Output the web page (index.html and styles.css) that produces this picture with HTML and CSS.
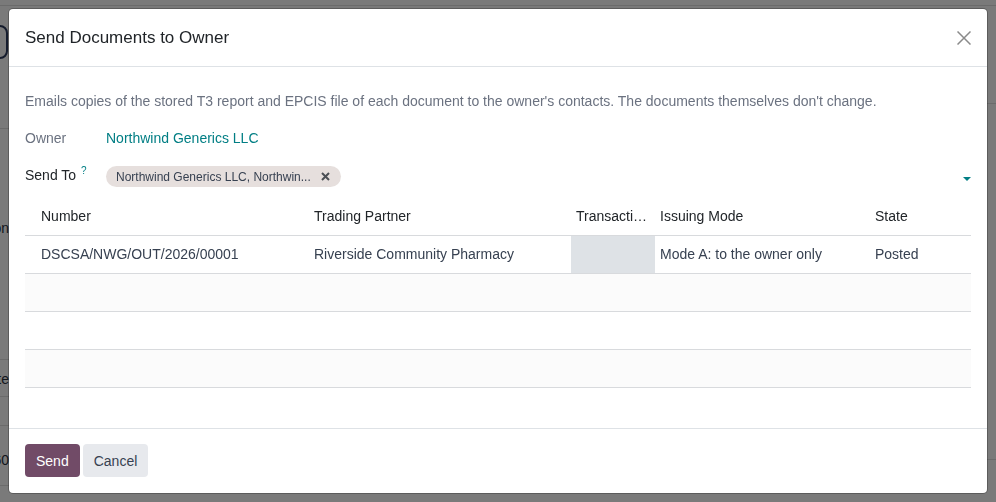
FILE: index.html
```html
<!DOCTYPE html>
<html lang="en">
<head>
    <meta charset="UTF-8">
    <meta name="viewport" content="width=device-width, initial-scale=1.0">
    <title>Send Documents to Owner</title>
    <link rel="stylesheet" href="styles.css">
</head>
<body>
    <!-- list view behind the dialog -->
    <div class="page">
        <div class="page-nav"></div>
        <div class="page-main">
            <div class="page-col page-col-left">
                <div class="cp-button"></div>
                <div class="page-block block-head"></div>
                <div class="page-block block-desc"><span class="page-text">Description</span></div>
                <div class="page-block block-date"><span class="page-text">Date</span></div>
                <div class="page-block block-gap"></div>
                <div class="page-block block-num"><span class="page-text">20260</span></div>
            </div>
            <div class="page-col">
                <div class="page-block block-right-top"></div>
                <div class="page-block block-right-mid"></div>
            </div>
        </div>
    </div>

    <div class="backdrop">
        <div class="modal">
            <header class="modal-header">
                <h4 class="modal-title">Send Documents to Owner</h4>
                <button class="btn-close" aria-label="Close">
                    <svg width="14" height="14" viewBox="0 0 14 14">
                        <path d="M0.5 0.5 L13.5 13.5 M13.5 0.5 L0.5 13.5" stroke="#8a8a8a" stroke-width="1.5" fill="none"/>
                    </svg>
                </button>
            </header>

            <main class="modal-body">
                <p class="intro">Emails copies of the stored T3 report and EPCIS file of each document to the owner's contacts. The documents themselves don't change.</p>

                <div class="field">
                    <span class="field-label muted">Owner</span>
                    <a class="field-link" href="#">Northwind Generics LLC</a>
                </div>

                <div class="field">
                    <span class="field-label">Send To <sup class="help">?</sup></span>
                    <div class="m2m">
                        <span class="tag">
                            Northwind Generics LLC, Northwin...
                            <svg class="tag-x" width="9" height="9" viewBox="0 0 9 9">
                                <path d="M1 1 L8 8 M8 1 L1 8" stroke="#4b4f55" stroke-width="2" fill="none"/>
                            </svg>
                        </span>
                        <span class="caret"></span>
                    </div>
                </div>

                <table class="doc-list">
                    <colgroup>
                        <col style="width: 284px">
                        <col style="width: 262px">
                        <col style="width: 84px">
                        <col style="width: 215px">
                        <col style="width: 101px">
                    </colgroup>
                    <thead>
                        <tr>
                            <th>Number</th>
                            <th>Trading Partner</th>
                            <th title="Transaction Statement">Transacti…</th>
                            <th>Issuing Mode</th>
                            <th>State</th>
                        </tr>
                    </thead>
                    <tbody>
                        <tr>
                            <td>DSCSA/NWG/OUT/2026/00001</td>
                            <td>Riverside Community Pharmacy</td>
                            <td class="readonly"></td>
                            <td>Mode A: to the owner only</td>
                            <td>Posted</td>
                        </tr>
                        <tr class="filler"><td></td><td></td><td></td><td></td><td></td></tr>
                        <tr class="filler"><td></td><td></td><td></td><td></td><td></td></tr>
                        <tr class="filler"><td></td><td></td><td></td><td></td><td></td></tr>
                    </tbody>
                </table>
            </main>

            <footer class="modal-footer">
                <button class="btn btn-primary">Send</button>
                <button class="btn btn-secondary">Cancel</button>
            </footer>
        </div>
    </div>
</body>
</html>
```

FILE: styles.css
```css
* {
    box-sizing: border-box;
}
body {
    margin: 0;
    height: 100vh;
    overflow: hidden;
    font-family: "Liberation Sans", Arial, sans-serif;
    font-size: 14px;
    color: #374151;
    background: #fff;
}

/* page under the dialog */
.page {
    height: 100%;
    display: flex;
    flex-direction: column;
}
.page-nav {
    height: 6px;
    flex-shrink: 0;
    border-bottom: 1px solid #e0e0e0;
}
.page-main {
    flex: 1;
    display: flex;
    justify-content: space-between;
}
.page-col {
    width: 30px;
}
.page-col-left {
    width: 9px;
}
.cp-button {
    height: 34px;
    width: 40px;
    margin: 19px 0 0 -32px;
    border: 2px solid #2d3b5e;
    border-radius: 8px;
}
.page-block {
    display: flex;
    justify-content: flex-end;
    align-items: flex-start;
    border-bottom: 1px solid #e0e0e0;
}
.page-text {
    white-space: nowrap;
    line-height: 24px;
    color: #2b3140;
}
.block-head { height: 70px; }
.block-desc { height: 230px; padding-top: 87px; border-bottom: 0; }
.block-date { height: 38px; padding-top: 7px; border-top: 1px solid #e0e0e0; }
.block-gap { height: 29px; }
.block-num { height: 60px; padding-top: 22px; }
.block-right-top { height: 98px; }
.block-right-mid { height: 356px; }

/* dialog */
.backdrop {
    position: fixed;
    inset: 0;
    padding: 9px;
    display: flex;
    background: rgba(0, 0, 0, 0.52);
}
.modal {
    flex: 1;
    display: flex;
    flex-direction: column;
    background: #fff;
    border-radius: 4px;
    box-shadow: 0 0 0 1px rgba(0, 0, 0, 0.25);
}
.modal-header {
    display: flex;
    align-items: center;
    padding: 17px 16px 16px;
    border-bottom: 1px solid #dee2e6;
}
.modal-title {
    margin: 0;
    font-size: 17px;
    font-weight: normal;
    line-height: 24px;
    color: #212529;
}
.btn-close {
    margin-left: auto;
    padding: 0;
    border: 0;
    background: none;
    display: flex;
}

.modal-body {
    flex: 1;
    padding: 24px 16px 0;
}
.intro {
    margin: 0 0 9px;
    line-height: 20px;
    color: #6b7280;
}
.field {
    display: flex;
    align-items: center;
    height: 36px;
}
.field-label {
    width: 81px;
    flex-shrink: 0;
    color: #212529;
}
.field-label.muted {
    color: #6b7280;
}
.help {
    font-size: 10px;
    color: #017e84;
    margin-left: 1px;
}
.field-link {
    color: #017e84;
    text-decoration: none;
}
.m2m {
    flex: 1;
    display: flex;
    align-items: center;
}
.tag {
    display: inline-flex;
    align-items: center;
    height: 21px;
    margin-top: 5px;
    padding: 0 11px 0 10px;
    border-radius: 11px;
    background: #e6dfdd;
    font-size: 12px;
    color: #374151;
    white-space: nowrap;
}
.tag-x {
    margin-left: 10px;
}
.caret {
    margin: 10px 0 0 auto;
    width: 0;
    height: 0;
    border-left: 4px solid transparent;
    border-right: 4px solid transparent;
    border-top: 4px solid #017e84;
}

.doc-list {
    width: 100%;
    margin-top: 5px;
    table-layout: fixed;
    border-collapse: collapse;
}
.doc-list th,
.doc-list td {
    height: 38px;
    padding: 0 5px;
    text-align: left;
    white-space: nowrap;
    overflow: hidden;
    border-bottom: 1px solid #d8dadd;
}
.doc-list th {
    font-weight: normal;
    color: #212529;
}
.doc-list th:first-child,
.doc-list td:first-child {
    padding-left: 16px;
}
.doc-list td {
    color: #374151;
}
.doc-list td.readonly {
    background: #dee2e6;
}
.doc-list tbody tr:nth-child(even) {
    background: #fbfbfb;
}

.modal-footer {
    display: flex;
    gap: 3px;
    padding: 15px 16px 16px;
    border-top: 1px solid #dee2e6;
}
.btn {
    height: 33px;
    padding: 0 11px;
    border: 0;
    border-radius: 4px;
    font-family: inherit;
    font-size: 14px;
}
.btn-primary {
    background: #714b67;
    color: #fff;
}
.btn-secondary {
    background: #e7e9ed;
    color: #374151;
}
```
